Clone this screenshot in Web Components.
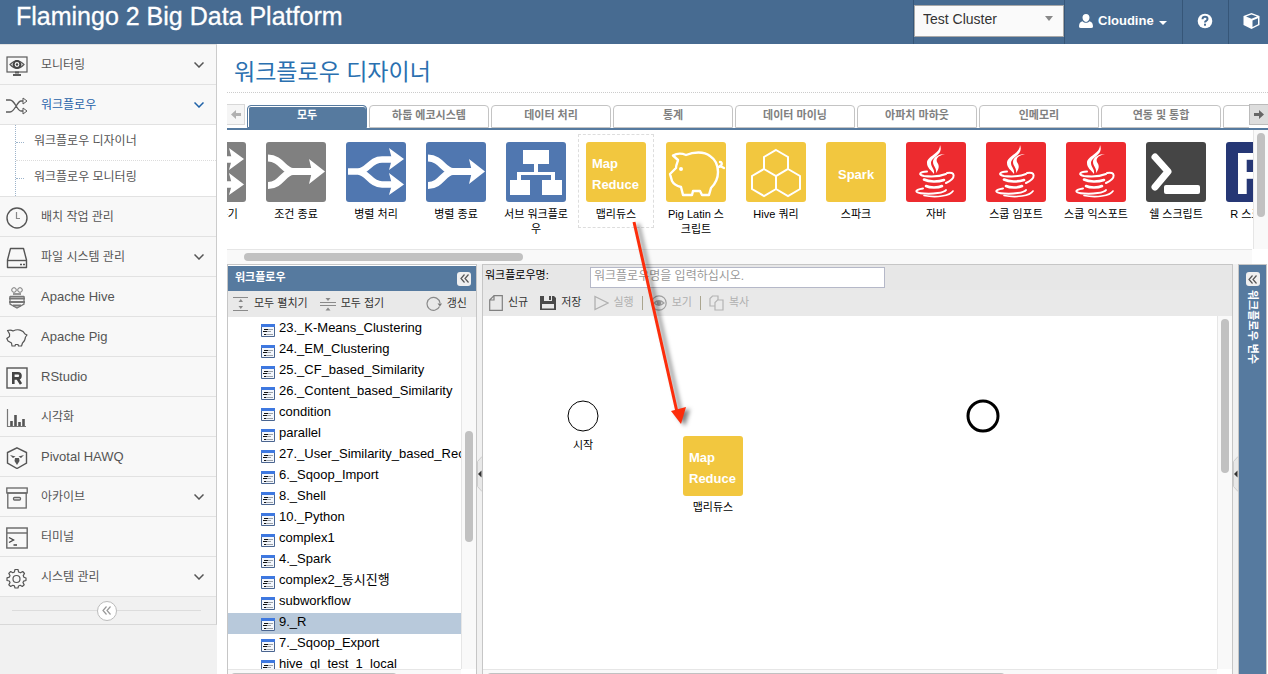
<!DOCTYPE html>
<html lang="ko">
<head>
<meta charset="utf-8">
<meta name="viewport" content="width=device-width, initial-scale=1">
<title>Flamingo 2 Big Data Platform</title>
<style>
  html, body { margin: 0; height: 100%; overflow: hidden; }
  body { font: 11px/15px "Liberation Sans", "Noto Sans CJK KR", sans-serif; color: #000; background: #fff; }
</style>
</head>
<body>
<flamingo-app></flamingo-app>

<script>
const define = (name, render, setup) => customElements.define(name, class extends HTMLElement {
  connectedCallback() {
    if (this.shadowRoot) return;
    const t = document.createElement('template');
    t.innerHTML = typeof render === 'function' ? render(this) : render;
    this.attachShadow({ mode: 'open' }).append(t.content.cloneNode(true));
    if (setup) setup(this);
  }
});

/* ---------- icons ---------- */
const java = `<g fill="none" stroke="#fff" stroke-linecap="round">
  <path fill="#fff" stroke="none" d="M34 3C38 13 25 15 25 21C25 25 29 27 28 32C25 28 21 26 21 21C21 14 34 12 34 3Z"/>
  <path fill="#fff" stroke="none" d="M39 12C31 14 30 17 31 20C33 23 34 26 30 31C31 26 27 24 27 20C27 15 33 12 39 12Z"/>
  <path stroke-width="2" d="M21 29.500C13 30 12 33 18 34C26 35 35 34 40 32"/>
  <path stroke-width="2" d="M41 31C49 29 51 36 40 41"/>
  <path stroke-width="2.600" d="M18 37.500C23 40 32 40 38 38"/>
  <path stroke-width="2.600" d="M20 44C24 46 32 46 36 44"/>
  <path stroke-width="2" d="M17 46.500C7 48 9 51 18 51.500C27 52 38 51 40 48"/>
  <path stroke-width="1.600" d="M18 53.500C30 56 44 54 47 49"/></g>`;
const merge = `<g fill="none" stroke="#fff" stroke-width="7"><path d="M2 16C15 16 18 29.500 27 29.500H46M2 43.500C15 43.500 18 29.500 27 29.500"/></g><path fill="#fff" d="M43 17L59 29.500L43 42L46 29.500Z"/>`;
const fork = `<g fill="none" stroke="#fff" stroke-width="6.500"><path d="M2 29.500H12C22 29 24 17.500 36 17.500H46M12 29.500C22 30 24 42.500 36 42.500H46"/></g><path fill="#fff" d="M43 6L58 17L43 28L46 17ZM43 31L58 42.500L43 53L46 42.500Z"/>`;
const hexes = 'M30 8L42 15V27L30 34L18 27V15ZM18 27L30 34V47L18 54L6 47V34ZM42 27L54 34V47L42 54L30 47V34Z';
const ICONS = {
  merge: [60, 60, merge],
  fork: [60, 60, fork],
  sub: [60, 60, `<path fill="#fff" d="M17 8H43V22H32V30H49V38H56V53H36V38H45V33H15V38H24V53H4V38H11V30H28V22H17Z"/>`],
  piglatin: [60, 60, `<g fill="none" stroke="#fff" stroke-width="2.400" stroke-linejoin="round" stroke-linecap="round"><path d="M7 13.500Q13 10 20 13C27 10 38 9 44 14C50 18 52 24 52 30C52 37 49 42 45 46L43 53H36L34 49H27L26 53H17L15 45C11 44 8 43 6 39L4 32L10 26C10 22 12 20 12 18Z"/><path d="M52 25C56 25 57 20 54 20M54 24L58 26"/></g><circle cx="15" cy="27" r="2" fill="#fff"/>`],
  hivequery: [60, 60, `<path fill="none" stroke="#fff" stroke-width="2" d="${hexes}"/>`],
  java: [60, 60, java],
  shell: [60, 60, `<path fill="none" stroke="#fff" stroke-width="7" stroke-linecap="round" stroke-linejoin="round" d="M9 15L22 29.500L9 45"/><rect x="18" y="43" width="36" height="9" rx="2" fill="#fff"/>`],
  rscript: [60, 60, `<text x="8" y="52" fill="#fff" font-family="Liberation Sans, sans-serif" font-weight="bold" font-size="60">R</text>`],

  monitor: [22, 22, `<g fill="none" stroke="#5b5b5b" stroke-width="1.200"><rect x="1" y="2" width="20" height="15"/><path d="M4 9.500Q11 2 18 9.500Q11 17 4 9.500Z"/><path stroke-width="2" d="M9 17.500H13M7 20H15"/></g><circle cx="11" cy="9.500" r="3.400" fill="none" stroke="#444" stroke-width="2"/><circle cx="11" cy="9.500" r="1.200" fill="#444"/>`],
  shuffle: [22, 22, `<g fill="none" stroke="#5b5b5b" stroke-width="1.300"><path d="M0 5H4C9 5 11 16 15 16H17M0 17H4C9 17 11 6 15 6H17"/><path d="M17 3V9L21 6ZM17 13V19L21 16Z" stroke-width="1"/></g>`],
  clock: [22, 22, `<circle cx="11" cy="11" r="10" fill="none" stroke="#555" stroke-width="1.400"/><path d="M10.500 5V11.500H14" fill="none" stroke="#888" stroke-width="1.200"/>`],
  disk: [22, 22, `<g fill="none" stroke="#555" stroke-width="1.400"><path d="M4.500 1.500H17.500L20.500 13V20.500H1.500V13Z" stroke-linejoin="round"/><path d="M1.500 13.500H20.500"/></g><path stroke="#555" stroke-width="1.500" d="M14 17.500H16M17 17.500H19"/>`],
  bee: [22, 22, `<g fill="none" stroke="#777"><circle cx="8" cy="3" r="2.300"/><circle cx="14" cy="3" r="2.300"/><path d="M7 7H15M4 9.500H18M4 9V17L11 21L18 17V9" stroke-width="1.300"/><path d="M3 11.500H19M3 15H19M7 18.500H15" stroke-width="2"/></g>`],
  pig: [22, 22, `<path fill="none" stroke="#555" stroke-width="1.200" stroke-linejoin="round" d="M1.500 3.500Q5 2.500 7 4C12 1.500 17 3 19 7L21 8L19.500 10C19 14 18 15 16.500 16L15.500 19H12.500L12 17.500H9.500L9 19H6L5.500 16L2 14L.8 11.500L3.500 9.500Q4 7 3 6Z"/>`],
  r: [22, 22, `<rect x="1" y="1" width="20" height="20" fill="none" stroke="#555" stroke-width="1.400"/><path fill="none" stroke="#444" stroke-width="2.600" d="M7.300 17V6.300H12Q14.500 6.300 14.500 8.800Q14.500 11.400 12 11.400H8M11.500 11.500L15 17"/>`],
  chart: [22, 22, `<path d="M1.500 2V19.500H20" fill="none" stroke="#777" stroke-width="1.200"/><path stroke="#555" stroke-width="2.600" d="M5.500 19V14M9.500 19V8M13.500 19V15M17.500 19V12"/>`],
  hawq: [22, 22, `<path d="M11 .8L20.500 5.500V16L11 21.500L1.500 16V5.500Z" fill="none" stroke="#555" stroke-width="1.400"/><path fill="#555" d="M4 8L9.500 9.500L7 11ZM18 8L12.500 9.500L15 11ZM9 11H13L13.500 14L11 18L8.500 14Z"/>`],
  archive: [22, 22, `<g fill="none" stroke="#666" stroke-width="1.300"><rect x=".8" y="1" width="20.400" height="5"/><rect x="1.800" y="6" width="18.400" height="15"/><rect x="7.500" y="10.500" width="7" height="2.500" rx="1"/></g>`],
  terminal: [22, 22, `<g fill="none" stroke="#666" stroke-width="1.400"><rect x=".8" y="1" width="20.400" height="20"/><path d="M1 6H21"/><path stroke="#444" d="M3 10.500L7.500 13L3 15.500M7.500 18H11"/></g>`],
  gear: [22, 22, `<g fill="none" stroke="#555" stroke-width="1.200" stroke-linejoin="round"><path d="M9 2.500H12L12.600 5L14.500 5.800L16.700 4.500L18.500 6.500L17.200 8.600L17.900 10.300L20 11V13.500L17.600 14.200L17 15.600L18.200 17.800L16.300 19.500L14.200 18.300L12.500 19L12 21H9L8.400 18.900L6.800 18.300L4.700 19.500L2.800 17.700L4 15.600L3.300 14L1 13.500V10.800L3.400 10.100L4 8.500L2.800 6.400L4.700 4.500L6.800 5.700L8.400 5Z"/><circle cx="10.500" cy="12" r="3.500"/></g>`],
  down: [10, 6, `<path d="M.5.5L5 5L9.500.5" fill="none" stroke="currentColor" stroke-width="1.500"/>`],
  user: [14, 16, `<path fill="#fff" d="M7 1C9.300 1 10.500 2.600 10.500 4.600C10.500 7 9 9 7 9S3.500 7 3.500 4.600C3.500 2.600 4.700 1 7 1ZM3.500 8.200C5.500 10.300 8.500 10.300 10.500 8.200C13 8.600 14 11 14 13.500Q14 15 12 15H2Q0 15 0 13.500C0 11 1 8.600 3.500 8.200Z"/>`],
  caret: [8, 4, `<path fill="currentColor" d="M0 0H8L4 4Z"/>`],
  dropdown: [10, 5, `<path fill="currentColor" d="M1 0H9L5 5Z"/>`],
  help: [16, 16, `<circle cx="8" cy="8" r="7.300" fill="#fff"/><path d="M5.500 6.200Q5.500 3.800 8 3.800T10.500 6Q10.500 7.200 9.200 7.800Q8 8.400 8 9.600" fill="none" stroke="#476b91" stroke-width="2"/><rect x="7" y="10.700" width="2" height="2" fill="#476b91"/>`],
  cube: [17, 18, `<path fill="#fff" fill-rule="evenodd" d="M8.500 1L16.500 4V13L8.500 17L.5 13V4ZM3 4.500L8.500 6.800L14 4.500L8.500 2.500ZM9.500 8.500V15L15 12.200V6.200Z"/>`],
  left: [10, 9, `<path fill="currentColor" d="M0 4.500L5 0V3H10V6H5V9Z"/>`],
  right: [10, 9, `<path fill="currentColor" d="M10 4.500L5 0V3H0V6H5V9Z"/>`],
  dleft: [9, 9, `<path fill="none" stroke="currentColor" stroke-width="1.200" d="M4.500.5L1 4.500L4.500 8.500M8.500.5L5 4.500L8.500 8.500"/>`],
  expand: [16, 16, `<path d="M0 1.500H15M0 14.500H15" stroke="#8a8a8a"/><path fill="#888" d="M5.500 6H10L7.800 3ZM5.500 10H10L7.800 13Z"/>`],
  collapse: [16, 16, `<path d="M0 6.500H16M0 9.500H16" stroke="#8a8a8a"/><path fill="#888" d="M5.500 2H10.500L8 5ZM5.500 14.500H10.500L8 11.500Z"/>`],
  refresh: [16, 16, `<path d="M13.500 10.500A6.500 6.500 0 1 1 14 7" fill="none" stroke="#8a8a8a" stroke-width="1.200"/><path fill="#777" d="M11.500 7.500H16L14 10.500Z"/>`],
  page: [14, 16, `<path d="M5 .7H13.300V15.300H.7V5H5ZM.7 5L5 .7" fill="none" stroke="#808080" stroke-width="1.200"/>`],
  save: [16, 16, `<path fill="#4a4a4a" fill-rule="evenodd" d="M0 1H4V6H12V1H14L16 3V15H0ZM2 9V13.500H14V9Z"/><path fill="#4a4a4a" d="M9 1H11V5H9Z"/>`],
  play: [15, 16, `<path d="M1 1.500L14 8L1 14.500Z" fill="none" stroke="#b0b0b0" stroke-width="1.300"/>`],
  eye: [16, 16, `<g fill="none" stroke="#a0a0a0" stroke-width="1.200"><circle cx="8" cy="8" r="7.200"/><path d="M3 8Q8 3.500 13 8Q8 12.500 3 8Z"/></g><circle cx="8" cy="8" r="2.400" fill="#999"/>`],
  copy: [15, 16, `<g fill="#eaeaea" stroke="#b4b4b4" stroke-width="1.200"><path d="M3.500 1H9V11H1V3.500Z"/><path d="M8.500 5H14V15H6V7.500Z"/></g>`],
  file: [14, 13, `<path fill="#f4f7fc" d="M0 0H14V13H0Z"/><path d="M.5 2V12.500H13.500V2" fill="none" stroke="#4a6590"/><path fill="#3e78e0" d="M0 0H14V3H0Z"/><path stroke="#111" d="M3 5.500H7M2 7.500H6M3 10.500H5"/><path stroke="#9aa0a8" d="M7 5.500H12M6 7.500H10M5 10.500H12"/>`]
};
define('fl-icon', el => {
  const [w, h, body] = ICONS[el.getAttribute('name')];
  return `<style>:host{display:block;flex:none;width:${w}px;height:${h}px}svg{display:block}</style>
  <svg width="${w}" height="${h}" viewBox="0 0 ${w} ${h}" aria-hidden="true">${body}</svg>`;
});

/* ---------- scrollbar: start / size are the thumb's place along the track ---------- */
define('fl-scroll', el => {
  const v = el.hasAttribute('vertical');
  return `<style>
    :host{display:flex;flex:none;box-sizing:border-box;background:#f9f9f9;padding:3px;
      ${v ? 'flex-direction:column;width:15px;border-left:1px solid #e6e6e6' : 'height:15px;border-top:1px solid #e6e6e6'}}
    .gap{flex:none;${v ? 'height' : 'width'}:${el.getAttribute('start')}px}
    .thumb{flex:none;border-radius:4px;background:#c1c1c1;${v ? 'height' : 'width'}:${el.getAttribute('size')};${v ? 'width' : 'height'}:8px}
  </style><div class="gap"></div><div class="thumb"></div>`;
});

/* ---------- header ---------- */
define('fl-header', `<style>
  :host{display:flex;flex:none;height:44px;background:#476b91;color:#fff;overflow:hidden}
  h1{flex:1;margin:0;padding-left:16px;font-size:25px;line-height:33px;font-weight:400;white-space:nowrap;-webkit-text-stroke:0.300px #fff}
  .cell{display:flex;align-items:center;box-sizing:border-box;height:44px;padding-bottom:3px;border-left:1px solid #365678}
  label{display:grid;align-items:start;padding-top:5px;border-left:1px solid #365678}
  select,.arrow{grid-area:1/1}
  .arrow{justify-self:end;margin:11px 10px 0 0;color:#888}
  select{appearance:none;box-sizing:border-box;width:150px;height:32px;margin:0;padding:0 8px 4px;border:1px solid #a8a8a8;border-radius:0;background:#fafafa;color:#333;font:14px "Liberation Sans",sans-serif}
  button{margin:0;border-width:0 0 0 1px;background:none;color:inherit;font:bold 13px/18px "Liberation Sans",sans-serif}
  .user{width:118px;gap:5px;padding-left:14px;padding-right:0}
  .caret{margin-top:3px}
  .help{width:46px;padding-left:14px}
  .cube{width:40px;padding-left:14px;padding-right:0}
</style>
<h1>Flamingo 2 Big Data Platform</h1>
<label><select aria-label="Cluster"><option>Test Cluster</option></select><fl-icon class="arrow" name="dropdown"></fl-icon></label>
<button class="cell user"><fl-icon name="user"></fl-icon>Cloudine<fl-icon class="caret" name="caret"></fl-icon></button>
<button class="cell help" aria-label="Help"><fl-icon name="help"></fl-icon></button>
<button class="cell cube" aria-label="Modules"><fl-icon name="cube"></fl-icon></button>`);

/* ---------- side navigation ---------- */
define('fl-nav-item', el => `<style>
  :host{display:block;border-bottom:1px solid #e2e2e2;background:#f8f8f8}
  a{display:flex;align-items:center;height:39px;padding:0 12px 0 6px;color:#555;text-decoration:none;
    font-size:${el.hasAttribute('latin') ? 13 : 12}px}
  a.on{color:#1f62a8}
  .ico{margin-top:2px}
  span{flex:1;margin-left:13px;padding-top:${el.hasAttribute('latin') ? 0 : 2}px}
</style>
<a href="#" class="${el.hasAttribute('active') ? 'on' : ''}"><fl-icon class="ico" name="${el.getAttribute('icon')}"></fl-icon><span><slot></slot></span>${el.hasAttribute('menu') ? '<fl-icon name="down"></fl-icon>' : ''}</a>`);

define('fl-subnav', `<style>
  :host{display:block;background:#fff;border-bottom:1px solid #e2e2e2}
  ul{margin:0 0 0 15px;padding:0;list-style:none;border-left:1px dotted #9db4cb}
  li{display:flex;align-items:center;height:35px}
  li::before{content:"";width:8px;margin-right:10px;border-top:1px dotted #9db4cb}
  li+li{border-top:1px dotted #dcdcdc}
  a{color:#555;text-decoration:none;font-size:12px;padding-bottom:2px}
</style><ul><li><a href="#">워크플로우 디자이너</a></li><li><a href="#">워크플로우 모니터링</a></li></ul>`);

define('fl-sidebar', `<style>
  :host{display:block;flex:none;width:217px;background:#f1f1f1}
  nav{border-right:1px solid #ccc;border-bottom:1px solid #d8d8d8;border-top:1px solid #e2e2e2}
  .foot{display:flex;align-items:center;height:27px;padding:0 15px 0 12px;background:#f1f1f1}
  .foot::before,.foot::after{content:"";flex:1;border-top:1px solid #dcdcdc}
  button{display:flex;align-items:center;justify-content:center;width:20px;height:20px;margin:0;padding:0;border:1px solid #bbb;border-radius:50%;background:#fff;color:#999}
</style>
<nav>
  <fl-nav-item icon="monitor" menu>모니터링</fl-nav-item>
  <fl-nav-item icon="shuffle" menu active>워크플로우</fl-nav-item>
  <fl-subnav></fl-subnav>
  <fl-nav-item icon="clock">배치 작업 관리</fl-nav-item>
  <fl-nav-item icon="disk" menu>파일 시스템 관리</fl-nav-item>
  <fl-nav-item icon="bee" latin>Apache Hive</fl-nav-item>
  <fl-nav-item icon="pig" latin>Apache Pig</fl-nav-item>
  <fl-nav-item icon="r" latin>RStudio</fl-nav-item>
  <fl-nav-item icon="chart">시각화</fl-nav-item>
  <fl-nav-item icon="hawq" latin>Pivotal HAWQ</fl-nav-item>
  <fl-nav-item icon="archive" menu>아카이브</fl-nav-item>
  <fl-nav-item icon="terminal">터미널</fl-nav-item>
  <fl-nav-item icon="gear" menu>시스템 관리</fl-nav-item>
  <div class="foot"><button aria-label="Collapse"><fl-icon name="dleft"></fl-icon></button></div>
</nav>`);

/* ---------- palette: tabs and module tiles ---------- */
define('fl-tabs', `<style>
  :host{display:flex;flex:none;height:25px;overflow:hidden;border-bottom:2px solid #567a9f;align-items:flex-start}
  .tabs{display:flex;flex:1;gap:2px;min-width:0;height:25px;align-items:flex-end;overflow:hidden;margin-left:2px}
  .tabs button{flex:none;box-sizing:border-box;width:120px;height:23px;margin:0;padding:0 0 2px;border:1px solid #c4c4c4;border-radius:4px 4px 0 0;background:#fff;color:#808080;font:bold 11px/15px "Liberation Sans","Noto Sans CJK KR",sans-serif}
  .tabs .on{border-color:#567a9f;box-shadow:inset 0 1px #fff,inset 1px 0 #fff;background:#567a9f;color:#fff}
  .step{display:flex;align-items:center;justify-content:center;box-sizing:border-box;flex:none;width:18px;height:21px;margin:1px 0 0;padding:0;border:1px solid #d8d8d8;border-left:0;background:#f5f5f5;color:#b0b0b0}
  .next{width:19px;border:1px solid #bbb;border-right:0;background:#ddd;color:#666}
</style>
<button class="step" aria-label="Previous"><fl-icon name="left"></fl-icon></button>
<div class="tabs" role="tablist">
  <button role="tab" class="on">모두</button><button role="tab">하둡 에코시스템</button><button role="tab">데이터 처리</button><button role="tab">통계</button><button role="tab">데이터 마이닝</button><button role="tab">아파치 마하웃</button><button role="tab">인메모리</button><button role="tab">연동 및 통합</button><button role="tab" aria-label="More"></button>
</div>
<button class="step next" aria-label="Next"><fl-icon name="right"></fl-icon></button>`);

define('fl-badge', el => `<style>
  :host{display:flex;align-items:center;justify-content:flex-start;box-sizing:border-box;width:60px;height:60px;border-radius:3px;overflow:hidden;
    background:${el.getAttribute('color')};color:#fff;text-align:left;font:bold 13px/21px "Liberation Sans",sans-serif}
  .txt{padding:4px 0 0 6px}
  .one{padding:4px 0 0 12px}
</style>${el.hasAttribute('icon') ? `<fl-icon name="${el.getAttribute('icon')}"></fl-icon>`
  : `<div class="${el.getAttribute('text').includes('|') ? 'txt' : 'one'}">${el.getAttribute('text').replace('|', '<br>')}</div>`}`);

define('fl-tile', el => `<style>
  :host{display:block;flex:none;box-sizing:border-box;width:76px;height:94px;padding:7px 5px 0;border:1px dashed ${el.hasAttribute('picked') ? '#ddd' : 'transparent'};text-align:center}
  fl-badge{margin:0 auto 5px}
</style><fl-badge color="${el.getAttribute('color')}" ${el.hasAttribute('icon') ? `icon="${el.getAttribute('icon')}"` : `text="${el.getAttribute('text')}"`}></fl-badge><slot></slot>`);

define('fl-palette', `<style>
  :host{display:flex;flex:none;flex-direction:column}
  .row{display:flex;height:119px}
  .view{flex:1;min-width:0;overflow:hidden}
  .strip{display:flex;gap:4px;padding-top:4px;margin-left:-49px}
  .h{margin-right:16px}
</style>
<div class="row"><div class="view"><div class="strip">
  <fl-tile color="#808080" icon="fork">조건 분기</fl-tile>
  <fl-tile color="#808080" icon="merge">조건 종료</fl-tile>
  <fl-tile color="#5077b0" icon="fork">병렬 처리</fl-tile>
  <fl-tile color="#5077b0" icon="merge">병렬 종료</fl-tile>
  <fl-tile color="#5077b0" icon="sub">서브 워크플로우</fl-tile>
  <fl-tile color="#f2c73f" text="Map|Reduce" picked>맵리듀스</fl-tile>
  <fl-tile color="#f2c73f" icon="piglatin">Pig Latin 스크립트</fl-tile>
  <fl-tile color="#f2c73f" icon="hivequery">Hive 쿼리</fl-tile>
  <fl-tile color="#f2c73f" text="Spark">스파크</fl-tile>
  <fl-tile color="#ed2b2f" icon="java">자바</fl-tile>
  <fl-tile color="#ed2b2f" icon="java">스쿱 임포트</fl-tile>
  <fl-tile color="#ed2b2f" icon="java">스쿱 익스포트</fl-tile>
  <fl-tile color="#454545" icon="shell">쉘 스크립트</fl-tile>
  <fl-tile color="#263775" icon="rscript">R 스크립트</fl-tile>
</div></div><fl-scroll vertical start="0" size="84px"></fl-scroll></div>
<fl-scroll class="h" start="14" size="279px"></fl-scroll>`);

/* ---------- shared workspace parts ---------- */
define('fl-tool', el => `<style>
  :host{display:block;flex:none}
  button{display:flex;align-items:center;gap:5px;height:22px;margin:0;padding:0;border:0;background:none;color:#333;font:inherit}
  button:disabled{color:#b0b0b0}
  span{padding-bottom:2px}
</style><button ${el.hasAttribute('disabled') ? 'disabled' : ''}><fl-icon name="${el.getAttribute('icon')}"></fl-icon><span><slot></slot></span></button>`);

define('fl-chevron-box', `<style>
  :host{display:block;flex:none}
  button{display:flex;align-items:center;justify-content:center;width:14px;height:14px;margin:0;padding:0;border:0;border-radius:3px;background:#f0f0f0;color:#555}
</style><button aria-label="Toggle panel"><fl-icon name="dleft"></fl-icon></button>`);

define('fl-splitter', `<style>
  :host{display:flex;flex:none;align-items:center;width:5px;background:#f1f1f1}
  svg{display:block}
</style><svg width="5" height="36" aria-hidden="true"><path d="M5 .5L.5 5.500V30.500L5 35.500" fill="#e8e8e8" stroke="#ccc"/><path d="M4.500 14.500L1 18L4.500 21.500Z" fill="#333"/></svg>`);

/* ---------- workflow tree ---------- */
define('fl-tree', `<style>
  :host{display:flex;flex-direction:column;flex:none;box-sizing:border-box;width:250px;border:1px solid #c6c6c6;border-bottom:0;min-height:0}
  header{display:flex;align-items:center;justify-content:space-between;height:25px;margin-top:1px;padding:0 5px 0 7px;background:#567a9f}
  h2{margin:0;padding-bottom:2px;font-size:11px;line-height:15px;color:#fff}
  .bar{display:flex;align-items:center;gap:12px;height:26px;padding:0 9px 0 5px;background:#e9e9e9}
  .bar :last-child{margin-left:auto}
  .body{display:flex;flex:1;min-height:0}
  ul{flex:1;min-width:0;margin:0;padding:2px 0 0;list-style:none;overflow:hidden}
  li{display:flex;gap:4px;height:21px;padding-left:33px;font-size:13px;line-height:17px;white-space:nowrap;overflow:hidden}
  li fl-icon{margin-top:5px}
  .on{background:#b8c9db}
  .h{margin-right:15px}
</style>
<header><h2>워크플로우</h2><fl-chevron-box></fl-chevron-box></header>
<div class="bar"><fl-tool icon="expand">모두 펼치기</fl-tool><fl-tool icon="collapse">모두 접기</fl-tool><fl-tool icon="refresh">갱신</fl-tool></div>
<div class="body"><ul></ul><fl-scroll vertical start="111" size="111px"></fl-scroll></div>
<fl-scroll class="h" start="0" size="166px"></fl-scroll>`, el => {
  const names = ['23._K-Means_Clustering', '24._EM_Clustering', '25._CF_based_Similarity', '26._Content_based_Similarity', 'condition', 'parallel', '27._User_Similarity_based_Recommendation', '6._Sqoop_Import', '8._Shell', '10._Python', 'complex1', '4._Spark', 'complex2_동시진행', 'subworkflow', '9._R', '7._Sqoop_Export', 'hive_ql_test_1_local'];
  el.shadowRoot.querySelector('ul').innerHTML = names.map(n => `<li class="${n === '9._R' ? 'on' : ''}"><fl-icon name="file"></fl-icon>${n}</li>`).join('');
});

/* ---------- designer ---------- */
define('fl-node', el => `<style>
  :host{position:absolute;left:${el.getAttribute('x')}px;top:${el.getAttribute('y')}px;display:flex;flex-direction:column;align-items:center;gap:4px;width:60px}
  svg{display:block}
</style>${el.hasAttribute('circle') ? `<svg width="36" height="36"><circle cx="18" cy="18" r="15" fill="#fff" stroke="#000" stroke-width="${el.getAttribute('circle')}"/></svg>` : '<fl-badge color="#f2c73f" text="Map|Reduce"></fl-badge>'}<slot></slot>`);

define('fl-designer', `<style>
  :host{display:flex;flex-direction:column;flex:1;min-width:0;min-height:0;border:1px solid #c6c6c6;border-bottom:0;box-sizing:border-box}
  form{display:flex;align-items:center;height:25px;margin:0;padding-left:2px;background:#e7e7e7}
  label{width:105px;padding-bottom:4px}
  input{box-sizing:border-box;width:295px;height:21px;margin:0;padding:0 3px 4px;border:1px solid #b5b8c8;border-radius:0;background:#fff;font:12px/15px "Liberation Sans","Noto Sans CJK KR",sans-serif}
  input::placeholder{color:#999;opacity:1}
  .bar{display:flex;align-items:center;gap:12px;height:26px;padding-left:6px;background:#e9e9e9}
  .sep{width:1px;height:14px;margin:0 -4px;background:#aaa58f}
  .body{display:flex;flex:1;min-height:0}
  .canvas{position:relative;flex:1;min-width:0;overflow:hidden;background:#fff}
  .h{margin-right:15px}
</style>
<form><label for="wf">워크플로우명:</label><input id="wf" placeholder="워크플로우명을 입력하십시오."></form>
<div class="bar"><fl-tool icon="page">신규</fl-tool><fl-tool icon="save">저장</fl-tool><fl-tool icon="play" disabled>실행</fl-tool><span class="sep"></span><fl-tool icon="eye" disabled>보기</fl-tool><span class="sep"></span><fl-tool icon="copy" disabled>복사</fl-tool></div>
<div class="body"><div class="canvas">
  <fl-node x="70" y="82" circle="1">시작</fl-node>
  <fl-node x="200" y="120">맵리듀스</fl-node>
  <fl-node x="470" y="82" circle="3"></fl-node>
</div><fl-scroll vertical start="0" size="154px"></fl-scroll></div>
<fl-scroll class="h" start="1" size="518px"></fl-scroll>`);

define('fl-variables', `<style>
  :host{display:flex;flex-direction:column;align-items:center;flex:none;box-sizing:border-box;width:29px;padding-top:7px;gap:4px;border:1px solid #c6c6c6;background:#567a9f}
  h2{margin:0;font-size:11px;line-height:15px;color:#fff;writing-mode:vertical-rl;text-orientation:sideways;white-space:nowrap}
</style><fl-chevron-box></fl-chevron-box><h2>워크플로우 변수</h2>`);

/* ---------- drag arrow over the workspace ---------- */
define('fl-drag-arrow', `<style>
  :host{position:absolute;left:404px;top:176px;pointer-events:none}
  svg{display:block;filter:drop-shadow(4px 2px 2px rgba(0,0,0,.5))}
</style><svg width="70" height="212" aria-hidden="true"><path d="M13 2L56 192" stroke="#fc2d0b" stroke-width="3"/><path d="M50 191L65 187L60 204Z" fill="#fc2d0b"/></svg>`);

define('flamingo-app', `<style>
  :host{display:flex;flex-direction:column;height:100vh;overflow:hidden}
  .page{display:flex;flex:1;min-height:0}
  main{position:relative;display:flex;flex-direction:column;flex:1;min-width:0;padding-left:10px}
  h1{flex:none;margin:0 0 10px;height:49px;box-sizing:border-box;padding:12px 0 0 7px;border-bottom:1px dotted #ccc;font-size:23px;line-height:32px;font-weight:400;color:#2a70b0}
  .work{display:flex;flex:1;min-height:0;margin:0 1px -10px 0}
</style>
<fl-header></fl-header>
<div class="page">
  <fl-sidebar></fl-sidebar>
  <main>
    <h1>워크플로우 디자이너</h1>
    <fl-tabs></fl-tabs>
    <fl-palette></fl-palette>
    <div class="work"><fl-tree></fl-tree><fl-splitter></fl-splitter><fl-designer></fl-designer><fl-splitter></fl-splitter><fl-variables></fl-variables></div>
    <fl-drag-arrow></fl-drag-arrow>
  </main>
</div>`);
</script>
</body>
</html>
